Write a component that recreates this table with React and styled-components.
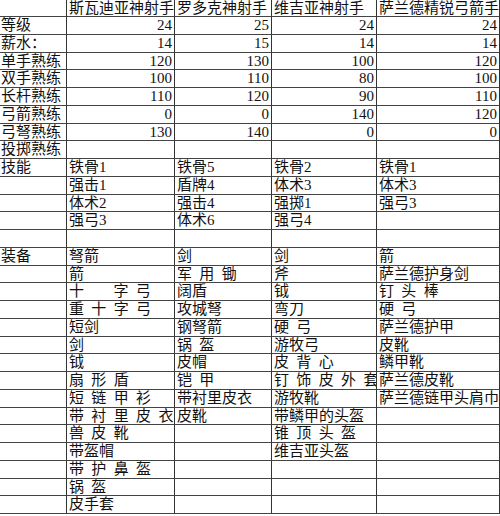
import React from 'react';
import styled, { createGlobalStyle } from 'styled-components';

const GlobalStyle = createGlobalStyle`
  html, body {
    margin: 0;
    padding: 0;
    background: #ffffff;
  }
`;

const Sheet = styled.div`
  display: grid;
  grid-template-columns: 67px 108px 97px 105px 123px;
  grid-template-rows: 17px repeat(28, 17.75px);
  width: 500px;
  font-family: "Liberation Serif", "Noto Sans CJK SC", serif;
  font-size: 15px;
  color: #111;
  word-spacing: 3.6px;
`;

const Cell = styled.div`
  box-sizing: border-box;
  border-right: 1px solid #333;
  border-bottom: 1px solid #444;
  padding: 0 ${p => (p.$num ? '2px' : '0')} 0 ${p => (p.$first ? '1px' : '2px')};
  text-align: ${p => (p.$num ? 'right' : 'left')};
  line-height: 17px;
  white-space: pre;
  overflow: hidden;
`;

const header = ['', '斯瓦迪亚神射手', '罗多克神射手', '维吉亚神射手', '萨兰德精锐弓箭手'];

const stats = [
  ['等级', 24, 25, 24, 24],
  ['薪水：', 14, 15, 14, 14],
  ['单手熟练', 120, 130, 100, 120],
  ['双手熟练', 100, 110, 80, 100],
  ['长杆熟练', 110, 120, 90, 110],
  ['弓箭熟练', 0, 0, 140, 120],
  ['弓弩熟练', 130, 140, 0, 0],
  ['投掷熟练', '', '', '', ''],
];

const skills = [
  ['技能', '铁骨1', '铁骨5', '铁骨2', '铁骨1'],
  ['', '强击1', '盾牌4', '体术3', '体术3'],
  ['', '体术2', '强击4', '强掷1', '强弓3'],
  ['', '强弓3', '体术6', '强弓4', ''],
  ['', '', '', '', ''],
];

const gear = [
  ['装备', '弩箭', '剑', '剑', '箭'],
  ['', '箭', '军 用 锄', '斧', '萨兰德护身剑'],
  ['', '十    字 弓', '阔盾', '钺', '钉 头 棒'],
  ['', '重 十 字 弓', '攻城弩', '弯刀', '硬 弓'],
  ['', '短剑', '钢弩箭', '硬 弓', '萨兰德护甲'],
  ['', '剑', '锅 盔', '游牧弓', '皮靴'],
  ['', '钺', '皮帽', '皮 背 心', '鳞甲靴'],
  ['', '扇 形 盾', '铠 甲', '钉 饰 皮 外 套', '萨兰德皮靴'],
  ['', '短 链 甲 衫', '带衬里皮衣', '游牧靴', '萨兰德链甲头肩巾'],
  ['', '带 衬 里 皮 衣', '皮靴', '带鳞甲的头盔', ''],
  ['', '兽 皮 靴', '', '锥 顶 头 盔', ''],
  ['', '带盔帽', '', '维吉亚头盔', ''],
  ['', '带 护 鼻 盔', '', '', ''],
  ['', '锅 盔', '', '', ''],
  ['', '皮手套', '', '', ''],
];

const renderRow = (row, r, numeric) =>
  row.map((value, c) => (
    <Cell key={`${r}-${c}`} $first={c === 0} $num={numeric && c > 0}>
      {value}
    </Cell>
  ));

const App = () => (
  <>
    <GlobalStyle />
    <Sheet>
      {renderRow(header, 'h', false)}
      {stats.map((row, i) => renderRow(row, `s${i}`, true))}
      {skills.map((row, i) => renderRow(row, `k${i}`, false))}
      {gear.map((row, i) => renderRow(row, `g${i}`, false))}
    </Sheet>
  </>
);

export default App;
